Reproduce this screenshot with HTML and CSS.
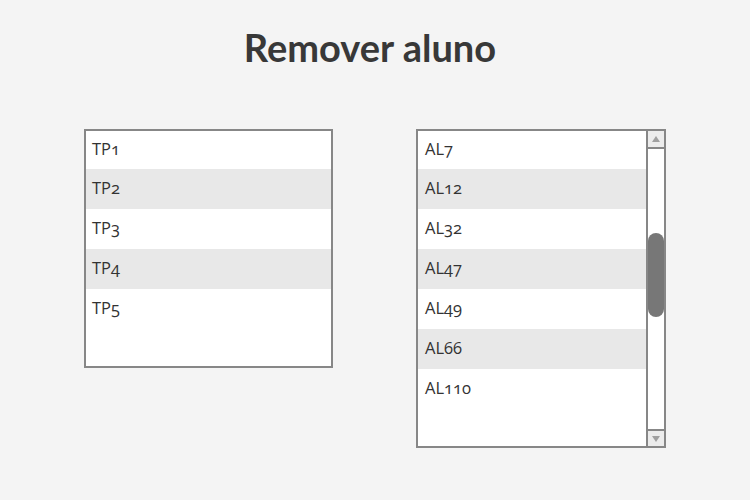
FILE: index.html
```html
<!DOCTYPE html>
<html lang="pt">
<head>
<meta charset="utf-8">
<title>Remover aluno</title>
<link rel="stylesheet" href="styles.css">
</head>
<body>
<main class="page">
  <h1 class="title">Remover aluno</h1>
  <div class="lists">
    <div class="listbox listbox-left">
      <ul class="items">
        <li class="item">TP1</li>
        <li class="item alt">TP2</li>
        <li class="item">TP3</li>
        <li class="item alt">TP4</li>
        <li class="item">TP5</li>
      </ul>
    </div>
    <div class="listbox listbox-right">
      <ul class="items">
        <li class="item">AL7</li>
        <li class="item alt">AL12</li>
        <li class="item">AL32</li>
        <li class="item alt">AL47</li>
        <li class="item">AL49</li>
        <li class="item alt">AL66</li>
        <li class="item">AL110</li>
      </ul>
      <div class="scrollbar">
        <div class="sb-btn sb-up"><span class="tri tri-up"></span></div>
        <div class="sb-track"><div class="sb-thumb"></div></div>
        <div class="sb-btn sb-down"><span class="tri tri-down"></span></div>
      </div>
    </div>
  </div>
</main>
</body>
</html>
```
FILE: styles.css
```css
html, body {
  margin: 0;
  padding: 0;
  background: #f4f4f4;
}
body {
  width: 750px;
  height: 500px;
  overflow: hidden;
  font-family: Lato, "Open Sans", sans-serif;
  color: #3a3a3a;
}
.page {
  display: flex;
  flex-direction: column;
  padding-top: 25px;
}
.title {
  margin: 0;
  height: 44px;
  line-height: 44px;
  font-size: 38px;
  font-weight: 700;
  text-align: center;
  padding-right: 10px;
  color: #383838;
}
.lists {
  display: flex;
  align-items: flex-start;
  gap: 83px;
  padding-left: 84px;
  margin-top: 60px;
}
.listbox {
  border: 2px solid #878787;
  background: #fff;
  display: flex;
  overflow: hidden;
}
.listbox-left {
  width: 245px;
  height: 235px;
}
.listbox-right {
  width: 246px;
  height: 315px;
}
.items {
  list-style: none;
  margin: 0;
  padding: 0;
  flex: 1;
  min-width: 0;
}
.item {
  height: 40px;
  line-height: 38px;
  padding-left: 6px;
  font-family: "Open Sans", Lato, sans-serif;
  font-size: 16.5px;
  font-weight: 500;
  font-variant-numeric: oldstyle-nums;
  color: #333;
  background: #fff;
}
.item:first-child {
  height: 38px;
  line-height: 36px;
}
.item.alt {
  background: #e8e8e8;
}
.listbox-right .item {
  padding-left: 7px;
}
.scrollbar {
  width: 16px;
  border-left: 2px solid #878787;
  display: flex;
  flex-direction: column;
}
.sb-btn {
  height: 16px;
  background: #ececec;
  display: flex;
  align-items: center;
  justify-content: center;
}
.sb-up {
  border-bottom: 2px solid #878787;
}
.sb-down {
  height: 15px;
  border-top: 2px solid #878787;
}
.tri {
  width: 0;
  height: 0;
  border-left: 4px solid transparent;
  border-right: 4px solid transparent;
}
.tri-up {
  border-bottom: 6px solid #a0a0a0;
}
.tri-down {
  border-top: 6px solid #a0a0a0;
}
.sb-track {
  flex: 1;
  background: #fff;
}
.sb-thumb {
  margin-top: 84px;
  height: 84px;
  width: 16px;
  border-radius: 8px;
  background: #777;
}
```
